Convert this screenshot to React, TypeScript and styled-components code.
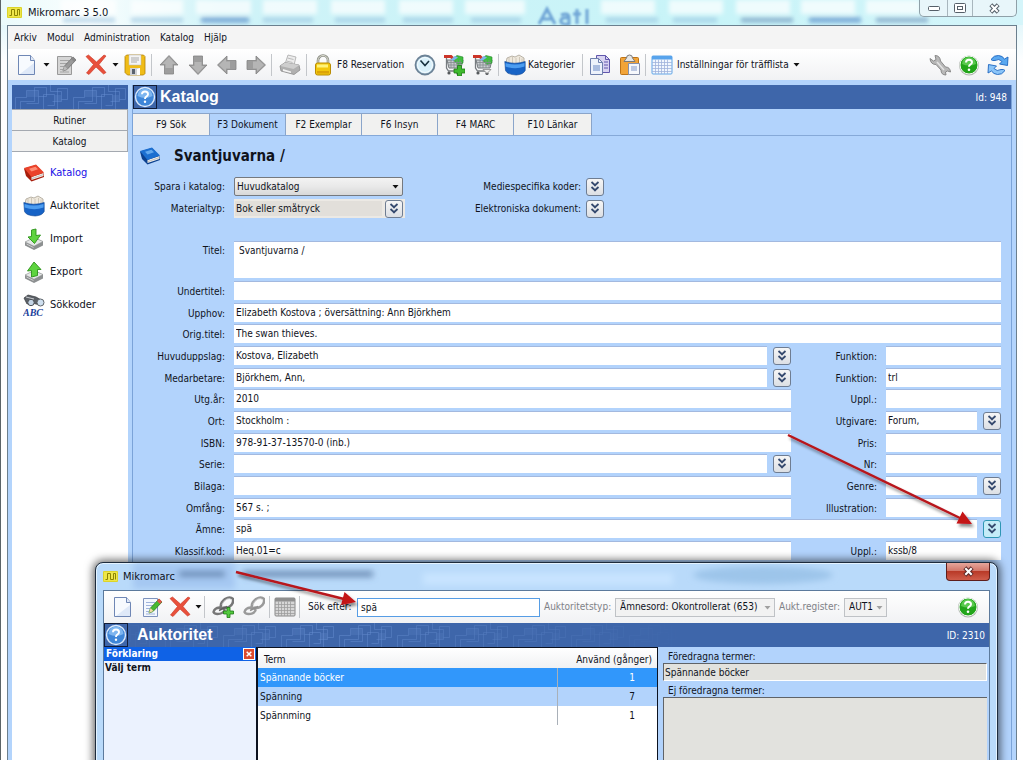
import React from "react";
import styled, { createGlobalStyle, css } from "styled-components";

const Global = createGlobalStyle`
  *, *::before, *::after { box-sizing: border-box; }
  body { margin: 0; overflow: hidden; }
  body, button, input, select, textarea {
    font-family: "DejaVu Sans Condensed", "DejaVu Sans", sans-serif;
    font-size: 10px;
    line-height: 14px;
    color: #10131c;
  }
  button { border: 0; padding: 0; background: none; }
  a { color: inherit; text-decoration: none; }
`;

/* ---------- icons ---------- */

type IconProps = { size?: number };
const Svg: React.FC<IconProps & { children: React.ReactNode }> = ({ size = 22, children }) => (
  <svg width={size} height={size} viewBox="0 0 22 22" fill="none" aria-hidden="true">
    {children}
  </svg>
);

const LogoIcon = () => (
  <svg width="15" height="11" viewBox="0 0 15 11" aria-hidden="true">
    <rect width="15" height="11" rx="1" fill="#dcd42a" />
    <path d="M1 1h13v9H1z" fill="#eee64a" />
    <path d="M2.500 8.500h2v-6h3v6h3v-6h2v6" fill="none" stroke="#8c8500" strokeWidth="1" />
  </svg>
);
const NewIcon = () => (
  <Svg>
    <path d="M2.500 1.500h12l4 5v14h-16z" fill="#f7fafe" stroke="#6f87b5" />
    <path d="M14.500 1.500v5h4" fill="#dfe8f7" stroke="#6f87b5" />
    <path d="M4 20h14V9z" fill="#dfe9f8" />
  </Svg>
);
const EditIcon = ({ on }: { on?: boolean }) => (
  <Svg>
    <path d="M2.500 2.500h14v18h-14z" fill={on ? "#f3f7fd" : "#d5d5d5"} stroke={on ? "#7d92bd" : "#999"} />
    <path d="M5 6.500h9M5 9.500h8M5 12.500h5M5 15.500h3M5 18h9" stroke={on ? "#9fb3dc" : "#a5a5a5"} />
    <path d="m8 17 1.500-5 8.500-9 3 3-9 9.500z" fill={on ? "#48b931" : "#9a9a9a"} stroke={on ? "#2b7a1e" : "#6d6d6d"} strokeWidth=".8" />
    <path d="m16 5 2-2.500 3 3L19 8z" fill={on ? "#e0564b" : "#888"} />
    <path d="m8 17 1.500-5 3 3z" fill={on ? "#f3d9a5" : "#bbb"} />
  </Svg>
);
const DeleteIcon = () => (
  <Svg>
    <path d="M1 2.500 3.500 1l8 7L19 1l2 1-7 8.500 7 8-2.500 1.500-7.500-7L4 20.500 1.500 19l7-8.500z" fill="#e8503c" stroke="#c9331f" strokeWidth=".6" />
  </Svg>
);
const SaveIcon = () => (
  <Svg>
    <path d="M1 2.500 2.500 1h17L21 2.500v17L19.500 21h-16L1 18.500z" fill="#f0bc17" stroke="#b28307" strokeWidth=".8" />
    <path d="M5 1h12v10H5z" fill="#f4f4f4" stroke="#bbb" strokeWidth=".5" />
    <path d="M7 4h8M7 6h8M7 8h6" stroke="#aaa" />
    <path d="M6 14h10v7H6z" fill="#d0d2d6" />
    <path d="M8 15h3v5H8z" fill="#5a626e" />
    <path d="M13 15v6h3v-7z" fill="#fff" />
  </Svg>
);
const ArrowIcon = ({ turn }: { turn: number }) => (
  <Svg>
    <g transform={`rotate(${turn} 11 11)`}>
      <path d="m11 1.500 9 9.500h-4.500v9h-9v-9H2z" fill="#9d9d9d" stroke="#838383" strokeWidth=".8" />
      <path d="m11 3 6.500 7h-3v4H7.500v-4h-3z" fill="#b5b5b5" />
    </g>
  </Svg>
);
const PrintIcon = () => (
  <Svg>
    <path d="m6 10 3-9 8 2-2 8z" fill="#ececec" stroke="#aaa" strokeWidth=".8" />
    <path d="m8.500 4 6 1.500M7.500 7l6 1.500" stroke="#bbb" />
    <path d="m1 12 5-3.500 14 2.500 1 5-6 4.500L2 17z" fill="#b0b0b0" stroke="#8c8c8c" strokeWidth=".8" />
    <path d="m1.500 12 13 3 6-4-14.500-2.500z" fill="#cecece" />
    <path d="m4 15 8 2.500v1.500l-8-2z" fill="#f4f4f4" />
  </Svg>
);
const LockIcon = () => (
  <Svg>
    <path d="M6 10V6.500a5 5 0 0 1 10 0V10" stroke="#8d8f86" strokeWidth="2.600" />
    <path d="M6 10V6.500a5 5 0 0 1 10 0V10" stroke="#dcdcd0" strokeWidth="1" />
    <rect x="3.500" y="9" width="15" height="12" rx="2" fill="#f3c70d" stroke="#b98c05" />
    <path d="M5 10.500h11v3H5z" fill="#fff37a" />
    <path d="M5 17h12v2.500H5z" fill="#dba306" />
  </Svg>
);
const ClockIcon = () => (
  <Svg>
    <circle cx="11" cy="11" r="9.500" fill="#c9e6f4" stroke="#6c8296" strokeWidth="1.800" />
    <circle cx="11" cy="11" r="7.500" fill="#d9f0fa" stroke="#fff" strokeWidth=".8" />
    <path d="m6.500 6.500 4.500 5 4-4.500" stroke="#16303f" strokeWidth="1.600" />
  </Svg>
);
const CartIcon = ({ add }: { add?: boolean }) => (
  <Svg>
    <path d="M3.500 3v11l2 3h11" stroke="#777c80" strokeWidth="1.300" />
    <path d="M4 6h16l-2 8H6z" fill="#c9cdd0" stroke="#73787c" />
    <path d="m9 5 5-3.500 6 1.500v6l-5 1.500z" fill="#3fbf3e" stroke="#25852c" strokeWidth=".6" />
    <path d="m7 5 5-3 3 1.500L10 7z" fill="#7eb4ea" />
    <path d="M5 8.500h14M5.500 11h13M8 6v8M11 6v8M14 6v8M17 6v8" stroke="#868b90" strokeWidth=".8" />
    <path d="M1 2.500h7l1.500 1.500" stroke="#cc3428" strokeWidth="3" />
    <circle cx="6" cy="19" r="1.600" fill="#55595c" />
    <circle cx="15" cy="19.500" r="1.600" fill="#55595c" />
    {add ? (
      <path d="M14.500 11.500h4v3.500H22v4h-3.500V22h-4v-3H11v-4h3.500z" fill="#3fba2e" stroke="#1c7a14" strokeWidth=".8" />
    ) : (
      <path d="M11 15.500h8l-4 4z" fill="#f2f2f2" stroke="#777" strokeWidth=".7" />
    )}
  </Svg>
);
const BoxIcon = () => (
  <Svg>
    <path d="m2 9 1-5 5-2 3 1 4-2 5 3v6l-9 3z" fill="#eee8dc" stroke="#a9a294" strokeWidth=".8" />
    <path d="M5 4v5M8.500 3v6M12 4v5M15.500 3v6M18 4.500V9" stroke="#c6beb0" strokeWidth=".8" />
    <path d="M.8 7.500q10 3.500 20.400 0v9q-2 4-9 4.500-9-.5-10.700-4.500z" fill="#1763c6" stroke="#0d4593" strokeWidth=".6" />
    <path d="M1.500 9q9 3 19 0v3.500q-9 3.500-19 0z" fill="#4d9df0" />
  </Svg>
);
const CopyIcon = () => (
  <Svg>
    <path d="M7.500 1.500h9l4 4v13h-13z" fill="#d8d3f1" stroke="#6157ad" />
    <path d="M16.500 1.500v4h4M15 8h4M15 11h4M15 14h4" stroke="#6157ad" />
    <path d="M1.500 4.500h8l4 4v12h-12z" fill="#edf2fb" stroke="#6e80ad" />
    <path d="M9.500 4.500v4h4" stroke="#6e80ad" />
    <path d="M4 11h7v6H4z" fill="#a9bce0" />
  </Svg>
);
const PasteIcon = () => (
  <Svg>
    <rect x="1.500" y="3.500" width="18" height="17" rx="1" fill="#f2a438" stroke="#bd7317" />
    <path d="M5 7.500 7.500 4q0-3 3-3t3 3L16 7.500z" fill="#e5e5e5" stroke="#7a7a7a" />
    <path d="M9.500 9.500h11v11h-11z" fill="#f6f8fc" stroke="#8690ab" />
    <path d="M12 12h6v5h-6z" fill="#bcc8e2" />
  </Svg>
);
const TableIcon = ({ off }: { off?: boolean }) => (
  <Svg>
    <rect x="1" y="2" width="20" height="18" rx="1" fill={off ? "#d6d6d6" : "#f1f7fe"} stroke={off ? "#888" : "#5fa6e8"} />
    <path d="M1 2h20v3.500H1z" fill={off ? "#8f8f8f" : "#57a3ec"} />
    <path d="M1 8.500h20M1 11.500h20M1 14.500h20M1 17.500h20M4.500 5.500V20M7.500 5.500V20M10.500 5.500V20M13.500 5.500V20M16.500 5.500V20" stroke={off ? "#9d9d9d" : "#9fb3dc"} strokeWidth=".8" />
  </Svg>
);
const WrenchIcon = () => (
  <Svg>
    <path d="M1 4.500 4.500 7 7 5.500 6 1.500q5 0 5.500 5.500l5 6q4.500 0 5 5l-3-1-2 1 .5 3q-5 0-5-5L7 10.500Q1.500 10.500 1 4.500z" fill="#b8b8b8" stroke="#808080" strokeWidth=".9" />
    <path d="m8 8 7 8" stroke="#e4e4e4" strokeWidth="1.500" />
  </Svg>
);
const HelpGreenIcon = () => (
  <Svg>
    <circle cx="11" cy="11.500" r="10" fill="#b0b5b0" />
    <circle cx="11" cy="11" r="9" fill="#22a51b" stroke="#f1fbf0" />
    <path d="M4 10a7 7 0 0 1 14 0q-7 3-14 0z" fill="#59c94e" />
    <path d="M8 8.500q0-2.800 3-2.800t3 2.600q0 1.500-1.700 2.300-1.300.7-1.300 2.200" stroke="#fff" strokeWidth="2" />
    <circle cx="11" cy="15.800" r="1.300" fill="#fff" />
  </Svg>
);
const RefreshIcon = () => (
  <Svg>
    <path d="M4 5.500Q7 1 11.500 1.500q4 .3 6 3.500l3.500-2-.5 8.500-8-1.500 2.500-2.500Q12 4 8 6.500 5 7 4 5.500z" fill="#5aa8f0" stroke="#1d65c0" strokeWidth=".9" />
    <path d="M18 16.500q-3 4.500-7.500 4-4-.3-6-3.500L1 19l.5-8.500 8 1.500L7 14.500q3 3.500 7 1 3-.5 4 1z" fill="#8ac4f8" stroke="#1d65c0" strokeWidth=".9" />
  </Svg>
);
const HelpBlueIcon = () => (
  <Svg>
    <circle cx="11" cy="11" r="9.500" fill="#3f86d8" stroke="#dbe9fa" strokeWidth="1.400" />
    <path d="M3.500 10a7.500 7.500 0 0 1 15 0q-7.500 4-15 0z" fill="#7db5ef" />
    <path d="M8 8.300Q8 5.500 11 5.500t3 2.700q0 1.500-1.700 2.400-1.300.7-1.300 2.400" stroke="#fff" strokeWidth="1.900" />
    <circle cx="11" cy="15.800" r="1.200" fill="#fff" />
  </Svg>
);
const BookIcon = ({ red, size }: { red?: boolean; size?: number }) => (
  <Svg size={size}>
    <path d="M1 6.500 13 3l8 8.500v3.500L8.500 19.500 3 14z" fill={red ? "#a81e0c" : "#0b418f"} />
    <path d="m8.500 15 12-4v3l-12 4z" fill="#f2efe9" />
    <path d="m9 16.500 11-3.800" stroke="#aaa" strokeWidth=".7" />
    <path d="M1 6 13 2.500l8 8-12.500 4.500z" fill={red ? "#ea432b" : "#1c6fd0"} />
    <path d="m6 6.800 6.500-2 2.500 2.500-6.500 2.200z" fill={red ? "#ff8c74" : "#63a9ee"} />
  </Svg>
);
const DriveIcon = ({ up }: { up?: boolean }) => (
  <Svg>
    <path d="m2 14.500 9-5 9 4v4L11 22l-9-4.500z" fill="#8d9091" />
    <path d="m2 14 9-4.500 9 4-9 4.800z" fill="#e6e8e8" stroke="#8d9091" strokeWidth=".6" />
    <path d="m3.500 16 7 3.500" stroke="#ccc" />
    <path
      d={up ? "m11 1 7 7.500h-3.500v6l-6 1.500V9.500L4.500 10z" : "M8.500 2 13 1v6.500l4.500-.5-6 8.500L5 9l3.500-.5z"}
      fill="#5ed43f"
      stroke="#2b9218"
      strokeWidth=".9"
    />
  </Svg>
);
const SearchCodesIcon = () => (
  <Svg>
    <path d="m1 4 4-3 8 2 7 4-3 4-8-2-5 1z" fill="#5c6167" stroke="#33373b" strokeWidth=".7" />
    <circle cx="8" cy="8.500" r="3.200" fill="#c4d5e6" stroke="#4c5056" />
    <circle cx="17.500" cy="8.500" r="3.500" fill="#cfe0f0" stroke="#60656b" />
    <path d="m3 3 8 2" stroke="#c9ccd0" />
    <text x="0" y="21.500" fontFamily="Liberation Serif, serif" fontSize="10" fontWeight="700" fontStyle="italic" fill="#1c3f9c">
      ABC
    </text>
  </Svg>
);
const LinkIcon = ({ add }: { add?: boolean }) => (
  <Svg>
    <path d="M9 11q-1-4 4-8 5-3 8 0 1 5-4 8-4 2-6 0" stroke={add ? "#777" : "#9a9a9a"} strokeWidth="2.600" />
    <path d="M10 9q1-4 5-6 3-1 5 1" stroke="#d2d2d2" strokeWidth=".9" />
    <path d="M1.500 16q1-4 6-4.500 5 0 5 3-2 3.500-7 3.500-3 0-4-2z" stroke={add ? "#777" : "#9a9a9a"} strokeWidth="2.400" />
    <path d="m7 14.500 8-4" stroke={add ? "#5f5f5f" : "#8f8f8f"} strokeWidth="1.800" />
    {add && <path d="M15 11.500h3v3.500h3.500v3H18v3.500h-3V18h-3.500v-3H15z" fill="#53c93e" stroke="#1c7a14" strokeWidth=".8" />}
  </Svg>
);
const Caret = ({ pale }: { pale?: boolean }) => (
  <svg width="7" height="4" viewBox="0 0 7 4" aria-hidden="true">
    <path d="M.5 0h6L3.500 3.500z" fill={pale ? "#a0a0a0" : "#111"} />
  </svg>
);
const Chevrons = () => (
  <svg width="10" height="12" viewBox="0 0 10 12" fill="none" aria-hidden="true">
    <path d="m1.500 1 3.500 3.200L8.500 1M1.500 6 5 9.200 8.500 6" stroke="#35496e" strokeWidth="1.800" />
    <path d="M3.800 4.200h2.400L5 5.500zM3.800 9.200h2.400L5 10.500z" fill="#35496e" />
  </svg>
);

/* ---------- window frame ---------- */

const Desktop = styled.div`
  position: relative;
  display: flex;
  flex-direction: column;
  height: 100vh;
  overflow: hidden;
  border-left: 1px solid #5b6468;
  background: linear-gradient(#d2f2f8, #fdfeff 60px, #fff);
`;
const TitleBar = styled.header`
  position: relative;
  display: flex;
  flex: none;
  align-items: center;
  gap: 6px;
  height: 25px;
  padding-left: 6px;
  background: linear-gradient(90deg, #eafafb, #fafefe 90px, #cff3f8 220px, #c8f4f8 70%, #d5f5fa);
`;
const WindowTitle = styled.h1`
  position: relative;
  margin: 0;
  font-size: 11px;
  font-weight: 400;
`;
const Glass = styled.svg`
  position: absolute;
  inset: 0;
  width: 100%;
  height: 100%;
`;
const CaptionButtons = styled.div`
  position: absolute;
  top: 0;
  right: 6px;
  display: flex;
  height: 17px;
  border: 1px solid #8fa0a8;
  border-top: 0;
  border-radius: 0 0 5px 5px;
  background: #e8f6fa;
`;
const CaptionButton = styled.button<{ $w: number }>`
  display: grid;
  place-items: center;
  width: ${(p) => p.$w}px;
  & + & { border-left: 1px solid #a8b6bd; }
`;
const Client = styled.div`
  display: flex;
  flex: 1;
  flex-direction: column;
  min-height: 0;
  margin: 0 6px;
  border: 1px solid #6b7f8e;
  border-bottom: 0;
  background: #b3d4fc;
`;
const MenuBar = styled.nav`
  display: flex;
  flex: none;
  align-items: center;
  gap: 10px;
  height: 23px;
  padding-left: 6px;
  background: #f4f4f4;
`;
const Toolbar = styled.div<{ $h: number }>`
  display: flex;
  flex: none;
  align-items: center;
  height: ${(p) => p.$h}px;
  padding: 0 4px;
  background: linear-gradient(#ffffff, #f1f2f4);
`;
const Tool = styled.button<{ $w?: number; $label?: boolean; $gap?: number }>`
  display: flex;
  flex: none;
  align-items: center;
  justify-content: ${(p) => (p.$label ? "flex-start" : "center")};
  gap: ${(p) => p.$gap ?? 3}px;
  width: ${(p) => (p.$w ? `${p.$w}px` : "auto")};
  padding-left: ${(p) => (p.$label ? 3 : 0)}px;
  height: 24px;
  white-space: nowrap;
`;
const Sep = styled.span`
  flex: none;
  width: 4px;
  height: 22px;
  background: linear-gradient(90deg, transparent 1px, #c3c6ca 1px, #c3c6ca 2px, transparent 2px);
`;
const Spacer = styled.span`
  flex: 1;
`;
const Workspace = styled.div`
  display: flex;
  flex: 1;
  gap: 4px;
  min-height: 0;
  padding: 5px 4px 0;
`;

/* ---------- side panel ---------- */

const Side = styled.aside`
  display: flex;
  flex: none;
  flex-direction: column;
  width: 116px;
  background: #fff;
`;
const Banner = styled.div`
  position: relative;
  height: 24px;
  background: #3a62a8;
`;
const SideTab = styled.button`
  height: 21px;
  padding-top: 2px;
  border: 1px solid #a4a9b0;
  border-width: 1px 1px 0 0;
  background: #f1f1f0;
  &:last-of-type { border-bottom-width: 1px; height: 22px; }
`;
const SideList = styled.ul`
  display: grid;
  gap: 11px;
  margin: 10px 0 0;
  padding: 0 0 0 11px;
  list-style: none;
`;
const SideLink = styled.a<{ $active?: boolean }>`
  display: flex;
  align-items: center;
  gap: 5px;
  height: 22px;
  font-size: 11px;
  color: ${(p) => (p.$active ? "#1a10e8" : "#10131c")};
`;

/* ---------- catalogue ---------- */

const Main = styled.main`
  display: flex;
  flex: 1;
  flex-direction: column;
  min-width: 0;
  border-right: 1px solid #7ba3d8;
  border-left: 1px solid #7ba3d8;
  background: #b2d3fc;
`;
const Heading = styled.div`
  position: relative;
  display: flex;
  flex: none;
  align-items: center;
  height: 24px;
  padding-right: 4px;
  background: #3e66aa;
  color: #fff;
`;
const HelpBadge = styled.button`
  position: relative;
  display: grid;
  place-items: center;
  width: 24px;
  height: 24px;
  border: 1px solid #101c38;
`;
const HeadingText = styled.h2<{ $gap: number }>`
  position: relative;
  flex: 1;
  margin: 0 0 0 ${(p) => p.$gap}px;
  font: 700 16px/22px "Liberation Sans", sans-serif;
`;
const RecordId = styled.span`
  position: relative;
  padding-top: 1px;
`;
const Tabs = styled.div`
  display: flex;
  flex: none;
  margin-top: 4px;
  border-bottom: 1px solid #86a9d8;
`;
const Tab = styled.button<{ $active?: boolean }>`
  width: 76px;
  height: 22px;
  border: 1px solid #8aa5ca;
  border-left-width: 0;
  border-bottom: 0;
  background: ${(p) => (p.$active ? "#b2d3fc" : "#f1f1f0")};
  margin-bottom: ${(p) => (p.$active ? "-1px" : "0")};
  &:first-child { width: 77px; }
  &:last-child { width: 78px; }
`;
const Form = styled.form`
  padding: 0 10px 0 0;
`;
const RecordTitle = styled.div`
  display: flex;
  align-items: center;
  gap: 13px;
  height: 20px;
  margin: 10px 0 11px 6px;
  h3 { margin: 0; font-size: 15px; line-height: 20px; }
`;
const TopGrid = styled.div`
  display: grid;
  grid-template-columns: 92px 171px 190px;
  column-gap: 9px;
  row-gap: 3px;
  grid-auto-rows: 19px;
  align-items: center;
`;
const Label = styled.label`
  text-align: right;
  white-space: nowrap;
`;
const CodeCell = styled.div`
  display: flex;
  align-items: center;
  justify-content: flex-end;
  gap: 5px;
`;
const SelectBox = styled.div<{ $w?: number; $flat?: boolean }>`
  position: relative;
  display: flex;
  width: ${(p) => (p.$w ? `${p.$w}px` : "169px")};
  height: 19px;
  select {
    width: 100%;
    padding: 0 12px 0 ${(p) => (p.$flat ? 4 : 2)}px;
    appearance: none;
    border: 1px solid ${(p) => (p.$flat ? "#bfc2c6" : "#75797f")};
    border-radius: ${(p) => (p.$flat ? 0 : 2)}px;
    background: ${(p) => (p.$flat ? "#f2f2f2" : "linear-gradient(#f3f3f3, #e9e9e9 50%, #d8d8d8)")};
  }
  svg { position: absolute; top: 8px; right: 4px; pointer-events: none; }
`;
const MaterialBox = styled.div`
  display: flex;
  align-items: center;
  gap: 3px;
  height: 19px;
  padding: 0 2px 0 0;
  background: #ece9e4;
`;
const fieldLook = css`
  min-width: 0;
  border: 0;
  border-radius: 0;
  background: #fff;
  box-shadow: 0 -1px 0 #a3b9df;
  outline: 0;
`;
const Field = styled.input`
  ${fieldLook}
  flex: 1;
  width: 100%;
  height: 18px;
  padding: 0 2px 1px;
`;
const MaterialField = styled(Field)`
  height: 15px;
  margin-left: 1px;
  padding: 0 1px;
  background: #e2dfda;
  box-shadow: none;
`;
const TitleField = styled.textarea`
  ${fieldLook}
  grid-column: 2 / -1;
  height: 36px;
  padding: 2px 5px;
  resize: none;
`;
const More = styled.button<{ $hot?: boolean }>`
  display: grid;
  flex: none;
  place-items: center;
  width: 18px;
  height: 18px;
  border: 1px solid ${(p) => (p.$hot ? "#2f96b4" : "#6f7d92")};
  border-radius: 3px;
  background: ${(p) => (p.$hot ? "#c5ecf8" : "linear-gradient(#f6f6f6, #dcdfe4)")};
`;
const Row = styled.div`
  display: grid;
  grid-template-columns: 92px minmax(0, 1fr) 77px 115px;
  column-gap: 9px;
  align-items: center;
  > label { padding-top: 2px; }
`;
const TitleRow = styled(Row)`
  align-items: start;
  margin: 24px 0 4px;
`;
const Rows = styled.div`
  display: grid;
  align-content: space-between;
  height: 278px;
`;
const Cell = styled.div<{ $wide?: boolean }>`
  display: flex;
  gap: 6px;
  ${(p) => p.$wide && "grid-column: 2 / -1;"}
`;

/* ---------- authority window ---------- */

const Popup = styled.section`
  position: absolute;
  top: 562px;
  right: 25px;
  bottom: -8px;
  left: 94px;
  display: flex;
  flex-direction: column;
  padding: 0 7px;
  border: 1px solid #1d2b3c;
  border-radius: 8px 8px 0 0;
  background: #b9dafa;
  box-shadow: inset 0 0 0 1px #e4f3ff, 0 0 8px 2px rgba(0, 0, 0, 0.6);
`;
const PopupTitle = styled.header`
  position: relative;
  display: flex;
  flex: none;
  align-items: center;
  gap: 5px;
  height: 27px;
`;
const CloseRed = styled.button`
  position: absolute;
  top: 0;
  right: 0;
  display: grid;
  place-items: center;
  width: 44px;
  height: 18px;
  border: 1px solid #5e1e1b;
  border-top: 0;
  border-radius: 0 0 4px 4px;
  background: linear-gradient(#e6a69b, #d2786b 45%, #b93a28 50%, #cf5d4b);
`;
const PopupBody = styled.div`
  display: flex;
  flex: 1;
  flex-direction: column;
  min-height: 0;
  border: 1px solid #5c7a9c;
  border-bottom: 0;
  background: #b2d3fc;
`;
const SearchField = styled.input`
  width: 183px;
  height: 19px;
  margin: 0 4px 0 1px;
  padding: 0 3px;
  border: 1px solid #569de5;
  outline: 0;
`;
const ToolLabel = styled.label<{ $dim?: boolean }>`
  flex: none;
  width: ${(p) => (p.$dim ? "auto" : "54px")};
  padding-left: ${(p) => (p.$dim ? 0 : 6)}px;
  white-space: nowrap;
  color: ${(p) => (p.$dim ? "#7f8287" : "#10131c")};
`;
const Tail = styled.span<{ $w: number; $inset?: number }>`
  display: flex;
  flex: none;
  gap: 1px;
  align-items: center;
  justify-content: space-between;
  width: ${(p) => p.$w}px;
  padding-left: ${(p) => p.$inset ?? 0}px;
`;
const Panes = styled.div`
  display: flex;
  flex: 1;
  min-height: 0;
`;
const Explain = styled.aside`
  flex: none;
  width: 152px;
  background: #ebf2fe;
  p { margin: 0; padding: 0 1px; font-weight: 700; }
`;
const ExplainHead = styled.div`
  display: flex;
  align-items: center;
  justify-content: space-between;
  height: 14px;
  padding: 0 1px 0 2px;
  background: #0f62e6;
  color: #fff;
  font-weight: 700;
`;
const TinyClose = styled.button`
  display: grid;
  place-items: center;
  width: 12px;
  height: 12px;
  border: 1px solid #fff;
  background: #dc4a2e;
`;
const Terms = styled.div`
  flex: 1;
  border: 2px solid #0c1220;
  border-width: 1px 1px 0 2px;
  background: #fff;
`;
const TermTable = styled.table`
  width: 100%;
  border-collapse: collapse;
  table-layout: fixed;
  th, td { height: 19px; padding: 0 2px; font-weight: 400; text-align: left; }
  th { height: 20px; padding: 3px 6px 0; background: linear-gradient(#fff, #f0f1f3); }
  td:last-child { border-left: 1px solid #a9b0b8; }
  th:last-child { width: 100px; padding: 3px 5px 0 0; text-align: right; white-space: nowrap; }
  td:last-child { padding-right: 22px; text-align: right; }
`;
const TermRow = styled.tr<{ $tone: "selected" | "tinted" | "plain" }>`
  background: ${(p) => ({ selected: "#3197fb", tinted: "#b2d3fc", plain: "#fff" })[p.$tone]};
  color: ${(p) => (p.$tone === "selected" ? "#fff" : "inherit")};
`;
const Preferred = styled.div`
  display: flex;
  flex: none;
  flex-direction: column;
  width: 331px;
  padding: 3px 2px 0 5px;
  label { padding-left: 5px; line-height: 13px; }
  label + input + label { padding-top: 3px; height: 16px; }
`;
const GreyField = styled.input`
  width: 100%;
  height: 18px;
  padding: 0 1px;
  border: 1px solid #fff;
  border-top-color: #5f6368;
  border-left-color: #5f6368;
  border-radius: 0;
  background: #e2e2de;
`;
const GreyArea = styled.textarea`
  flex: 1;
  border: 1px solid #5f6368;
  border-right: 0;
  background: #e2e2de;
  resize: none;
`;
const Arrows = styled.svg`
  position: absolute;
  top: 0;
  left: 0;
  width: 1023px;
  height: 760px;
  pointer-events: none;
`;

/* ---------- composition ---------- */

const CircuitArt = ({ id, fade }: { id: string; fade?: boolean }) => (
  <Glass aria-hidden="true">
    <defs>
      <pattern id={id} width="58" height="24" patternUnits="userSpaceOnUse">
        <g fill="none" stroke="#6a93d6" strokeOpacity=".45">
          <path d="M3.500 24V12.500h11V5.500h12v13h-12M8.500 24v-7.500h14V2.500h12v9h-8M31.500 24V9.500h11v11h-7M38.500 0v6.500h11v10h-9M45.500 24V3.500h10V14.500h-6" />
        </g>
        <path d="M15 6h11v6H15zM43 10h6v6h-6z" fill="#5f88cc" fillOpacity=".3" />
      </pattern>
      <linearGradient id={`${id}f`}>
        <stop offset="0" stopColor="#fff" stopOpacity={fade ? 0 : 1} />
        <stop offset=".25" stopColor="#fff" />
        <stop offset=".66" stopColor="#fff" stopOpacity={fade ? 0 : 1} />
      </linearGradient>
      <mask id={`${id}m`}>
        <rect width="100%" height="100%" fill={`url(#${id}f)`} />
      </mask>
    </defs>
    <rect width="100%" height="100%" fill={`url(#${id})`} mask={`url(#${id}m)`} />
  </Glass>
);

type RightField = { label: string; value?: string; more?: boolean };
type Line = { label: string; value?: string; more?: boolean; hot?: boolean; right?: RightField };
const lines: Line[] = [
  { label: "Undertitel:" },
  { label: "Upphov:", value: "Elizabeth Kostova ; översättning: Ann Björkhem" },
  { label: "Orig.titel:", value: "The swan thieves." },
  { label: "Huvuduppslag:", value: "Kostova, Elizabeth", more: true, right: { label: "Funktion:" } },
  { label: "Medarbetare:", value: "Björkhem, Ann,", more: true, right: { label: "Funktion:", value: "trl" } },
  { label: "Utg.år:", value: "2010", right: { label: "Uppl.:" } },
  { label: "Ort:", value: "Stockholm :", right: { label: "Utgivare:", value: "Forum,", more: true } },
  { label: "ISBN:", value: "978-91-37-13570-0 (inb.)", right: { label: "Pris:" } },
  { label: "Serie:", more: true, right: { label: "Nr:" } },
  { label: "Bilaga:", right: { label: "Genre:", more: true } },
  { label: "Omfång:", value: "567 s. ;", right: { label: "Illustration:" } },
  { label: "Ämne:", value: "spä", more: true, hot: true },
  { label: "Klassif.kod:", value: "Heq.01=c", right: { label: "Uppl.:", value: "kssb/8" } },
];

const MoreButton = ({ name, hot }: { name: string; hot?: boolean }) => (
  <More type="button" $hot={hot} aria-label={name}>
    <Chevrons />
  </More>
);

const FieldRow = ({ line, index }: { line: Line; index: number }) => (
  <Row>
    <Label htmlFor={`f${index}`}>{line.label}</Label>
    <Cell $wide={!line.right}>
      <Field id={`f${index}`} defaultValue={line.value} />
      {line.more && <MoreButton name={line.label} hot={line.hot} />}
    </Cell>
    {line.right && (
      <>
        <Label htmlFor={`r${index}`}>{line.right.label}</Label>
        <Cell>
          <Field id={`r${index}`} defaultValue={line.right.value} />
          {line.right.more && <MoreButton name={line.right.label} />}
        </Cell>
      </>
    )}
  </Row>
);

const sideItems = [
  { text: "Katalog", icon: <BookIcon red /> },
  { text: "Auktoritet", icon: <BoxIcon /> },
  { text: "Import", icon: <DriveIcon /> },
  { text: "Export", icon: <DriveIcon up /> },
  { text: "Sökkoder", icon: <SearchCodesIcon /> },
];

const Cross = ({ stroke, size }: { stroke: string; size: number }) => (
  <svg width={size} height={size} viewBox="0 0 12 12" aria-hidden="true">
    <path d="m2 2 8 8M10 2l-8 8" stroke={stroke} strokeWidth="4.500" />
    <path d="m2.500 2.500 7 7M9.500 2.500l-7 7" stroke="#fff" strokeWidth="2.200" />
  </svg>
);

const MainToolbar = () => (
  <Toolbar $h={31}>
    <Tool $w={29} aria-label="Ny"><NewIcon /></Tool>
    <Tool $w={10} aria-label="Ny, val"><Caret /></Tool>
    <Tool $w={30} aria-label="Redigera"><EditIcon /></Tool>
    <Tool $w={29} aria-label="Ta bort"><DeleteIcon /></Tool>
    <Tool $w={10} aria-label="Ta bort, val"><Caret /></Tool>
    <Tool $w={30} aria-label="Spara"><SaveIcon /></Tool>
    <Sep />
    <Tool $w={29} aria-label="Upp"><ArrowIcon turn={0} /></Tool>
    <Tool $w={29} aria-label="Ned"><ArrowIcon turn={180} /></Tool>
    <Tool $w={29} aria-label="Föregående"><ArrowIcon turn={270} /></Tool>
    <Tool $w={29} aria-label="Nästa"><ArrowIcon turn={90} /></Tool>
    <Sep />
    <Tool $w={31} aria-label="Skriv ut"><PrintIcon /></Tool>
    <Sep />
    <Tool $w={102} $label><LockIcon />F8 Reservation</Tool>
    <Tool $w={28} aria-label="Tid"><ClockIcon /></Tool>
    <Tool $w={29} aria-label="Lägg i korg"><CartIcon add /></Tool>
    <Tool $w={29} aria-label="Korg"><CartIcon /></Tool>
    <Sep />
    <Tool $w={80} $label $gap={2}><BoxIcon />Kategorier</Tool>
    <Sep />
    <Tool $w={30} aria-label="Kopiera"><CopyIcon /></Tool>
    <Tool $w={29} aria-label="Klistra in"><PasteIcon /></Tool>
    <Sep />
    <Tool $label $gap={4}><TableIcon />Inställningar för träfflista<Caret /></Tool>
    <Spacer />
    <Tool $w={29} aria-label="Verktyg"><WrenchIcon /></Tool>
    <Tool $w={29} aria-label="Hjälp"><HelpGreenIcon /></Tool>
    <Tool $w={29} aria-label="Uppdatera"><RefreshIcon /></Tool>
  </Toolbar>
);

const AuthorityWindow = () => (
  <Popup>
    <PopupTitle>
      <Glass aria-hidden="true">
        <defs>
          <filter id="soft" x="-20%" y="-100%" width="140%" height="300%"><feGaussianBlur stdDeviation="3" /></filter>
        </defs>
        <g filter="url(#soft)">
          <rect x="30" y="0" width="102" height="26" fill="#a5c8f2" />
          <rect x="320" y="10" width="250" height="12" fill="#c8e4ff" />
          <ellipse cx="660" cy="12" rx="70" ry="9" fill="#9dc5ea" />
          <path d="M76 11h46M140 11h130" stroke="#51719c" strokeOpacity=".75" strokeWidth="6" />
        </g>
      </Glass>
      <LogoIcon />
      <WindowTitle as="h2">Mikromarc</WindowTitle>
      <CloseRed aria-label="Stäng"><Cross stroke="#5d2a2a" size={11} /></CloseRed>
    </PopupTitle>
    <PopupBody>
      <Toolbar $h={32}>
        <Tool $w={29} aria-label="Ny"><NewIcon /></Tool>
        <Tool $w={30} aria-label="Redigera"><EditIcon on /></Tool>
        <Tool $w={26} aria-label="Ta bort"><DeleteIcon /></Tool>
        <Tool $w={10} aria-label="Ta bort, val"><Caret /></Tool>
        <Sep />
        <Tool $w={32} aria-label="Lägg till länk"><LinkIcon add /></Tool>
        <Tool $w={29} aria-label="Länk"><LinkIcon /></Tool>
        <Sep />
        <Tool $w={26} aria-label="Tabell"><TableIcon off /></Tool>
        <Sep />
        <ToolLabel htmlFor="q">Sök efter:</ToolLabel>
        <SearchField id="q" defaultValue="spä" />
        <Tail $w={231}>
          <ToolLabel $dim htmlFor="atype">Auktoritetstyp:</ToolLabel>
          <SelectBox $flat $w={160}>
            <select id="atype"><option>Ämnesord: Okontrollerat (653)</option></select>
            <Caret pale />
          </SelectBox>
        </Tail>
        <Tail $w={112} $inset={4}>
          <ToolLabel $dim htmlFor="areg">Aukt.register:</ToolLabel>
          <SelectBox $flat $w={43}>
            <select id="areg"><option>AUT1</option></select>
            <Caret pale />
          </SelectBox>
        </Tail>
        <Spacer />
        <Tool $w={34} aria-label="Hjälp"><HelpGreenIcon /></Tool>
      </Toolbar>
      <Heading>
        <CircuitArt id="art2" fade />
        <HelpBadge aria-label="Hjälp"><HelpBlueIcon /></HelpBadge>
        <HeadingText $gap={9}>Auktoritet</HeadingText>
        <RecordId>ID: 2310</RecordId>
      </Heading>
      <Panes>
        <Explain>
          <ExplainHead>
            Förklaring
            <TinyClose aria-label="Stäng"><Cross stroke="#dc4a2e" size={8} /></TinyClose>
          </ExplainHead>
          <p>Välj term</p>
        </Explain>
        <Terms>
          <TermTable>
            <thead><tr><th>Term</th><th>Använd (gånger)</th></tr></thead>
            <tbody>
              <TermRow $tone="selected"><td>Spännande böcker</td><td>1</td></TermRow>
              <TermRow $tone="tinted"><td>Spänning</td><td>7</td></TermRow>
              <TermRow $tone="plain"><td>Spännming</td><td>1</td></TermRow>
            </tbody>
          </TermTable>
        </Terms>
        <Preferred>
          <label htmlFor="pref">Föredragna termer:</label>
          <GreyField id="pref" readOnly value="Spännande böcker" />
          <label htmlFor="nonpref">Ej föredragna termer:</label>
          <GreyArea id="nonpref" readOnly />
        </Preferred>
      </Panes>
    </PopupBody>
  </Popup>
);

export default function App() {
  return (
    <>
      <Global />
      <Desktop>
        <TitleBar>
          <Glass aria-hidden="true">
            <defs>
              <filter id="haze" x="-10%" y="-100%" width="120%" height="300%"><feGaussianBlur stdDeviation="2" /></filter>
              <filter id="haze1" x="-10%" y="-50%" width="120%" height="200%"><feGaussianBlur stdDeviation="1" /></filter>
            </defs>
            <g filter="url(#haze)">
              <path d="M60 7h55M130 7h52M195 7h55M262 7h54M330 7h54M398 7h54M464 7h60M600 7h54M668 7h54M735 7h54M800 7h54M865 7h54" stroke="#fff" strokeOpacity=".7" strokeWidth="14" />
              <path d="M62 20h52M130 20h52M262 20h50M334 20h50M402 20h50M470 20h50M605 20h52M672 20h44" stroke="#8fbcda" strokeOpacity=".55" strokeWidth="5" />
              <path d="M200 20h48M808 20h52" stroke="#3f78c0" strokeOpacity=".55" strokeWidth="6" />
              <path d="M740 20h52M875 20h52" stroke="#5d7fae" strokeOpacity=".55" strokeWidth="5" />
            </g>
            <path d="m538 24 8-15 8 15M541 19h10M560 15q8-3 8 3v6q-9 1-8-4 1-3 8-2M576 9v15M572 14h8M586 9v15" fill="none" stroke="#6fa5d6" strokeWidth="3" filter="url(#haze1)" />
          </Glass>
          <LogoIcon />
          <WindowTitle>Mikromarc 3 5.0</WindowTitle>
          <CaptionButtons>
            <CaptionButton $w={27} aria-label="Minimera">
              <svg width="12" height="5" viewBox="0 0 12 5" aria-hidden="true"><rect x=".5" y=".5" width="11" height="4" rx="1" fill="#fff" stroke="#555f68" /></svg>
            </CaptionButton>
            <CaptionButton $w={25} aria-label="Maximera">
              <svg width="12" height="10" viewBox="0 0 12 10" aria-hidden="true"><rect x=".5" y=".5" width="11" height="9" rx="1" fill="#fff" stroke="#555f68" /><rect x="3.500" y="3.500" width="5" height="3" fill="#fff" stroke="#555f68" /></svg>
            </CaptionButton>
            <CaptionButton $w={44} aria-label="Stäng"><Cross stroke="#555f68" size={11} /></CaptionButton>
          </CaptionButtons>
        </TitleBar>
        <Client>
          <MenuBar>
            {["Arkiv", "Modul", "Administration", "Katalog", "Hjälp"].map((m) => (
              <a href="#" key={m}>{m}</a>
            ))}
          </MenuBar>
          <MainToolbar />
          <Workspace>
            <Side>
              <Banner><CircuitArt id="art1" /></Banner>
              <SideTab>Rutiner</SideTab>
              <SideTab>Katalog</SideTab>
              <SideList>
                {sideItems.map((s, i) => (
                  <li key={s.text}><SideLink href="#" $active={i === 0}>{s.icon}{s.text}</SideLink></li>
                ))}
              </SideList>
            </Side>
            <Main>
              <Heading>
                <HelpBadge aria-label="Hjälp"><HelpBlueIcon /></HelpBadge>
                <HeadingText $gap={3}>Katalog</HeadingText>
                <RecordId>Id: 948</RecordId>
              </Heading>
              <Tabs>
                {["F9 Sök", "F3 Dokument", "F2 Exemplar", "F6 Insyn", "F4 MARC", "F10 Länkar"].map((t, i) => (
                  <Tab key={t} $active={i === 1}>{t}</Tab>
                ))}
              </Tabs>
              <Form>
                <RecordTitle><BookIcon /><h3>Svantjuvarna /</h3></RecordTitle>
                <TopGrid>
                  <Label htmlFor="save">Spara i katalog:</Label>
                  <SelectBox>
                    <select id="save"><option>Huvudkatalog</option></select>
                    <Caret />
                  </SelectBox>
                  <CodeCell>Mediespecifika koder:<MoreButton name="Mediespecifika koder" /></CodeCell>
                  <Label htmlFor="mat">Materialtyp:</Label>
                  <MaterialBox>
                    <MaterialField id="mat" defaultValue="Bok eller småtryck" />
                    <MoreButton name="Materialtyp" />
                  </MaterialBox>
                  <CodeCell>Elektroniska dokument:<MoreButton name="Elektroniska dokument" /></CodeCell>
                </TopGrid>
                <TitleRow>
                  <Label htmlFor="titel">Titel:</Label>
                  <TitleField id="titel" defaultValue="Svantjuvarna /" />
                </TitleRow>
                <Rows>
                  {lines.map((l, i) => (
                    <FieldRow key={i} line={l} index={i} />
                  ))}
                </Rows>
              </Form>
            </Main>
          </Workspace>
        </Client>
        <AuthorityWindow />
        <Arrows viewBox="0 0 1023 760" aria-hidden="true">
          <defs>
            <filter id="drop" x="-10%" y="-20%" width="120%" height="150%"><feDropShadow dx="2" dy="3" stdDeviation="1.500" floodOpacity=".45" /></filter>
          </defs>
          <g filter="url(#drop)" stroke="#b8141a" fill="#c41218">
            <path d="m787 435 172 83" strokeWidth="2.400" />
            <path d="m971 524-15.500-.5 6-12z" stroke="none" />
            <path d="m235 572 108 27" strokeWidth="2.400" />
            <path d="m355 602-15 3 3.500-13z" stroke="none" />
          </g>
        </Arrows>
      </Desktop>
    </>
  );
}
